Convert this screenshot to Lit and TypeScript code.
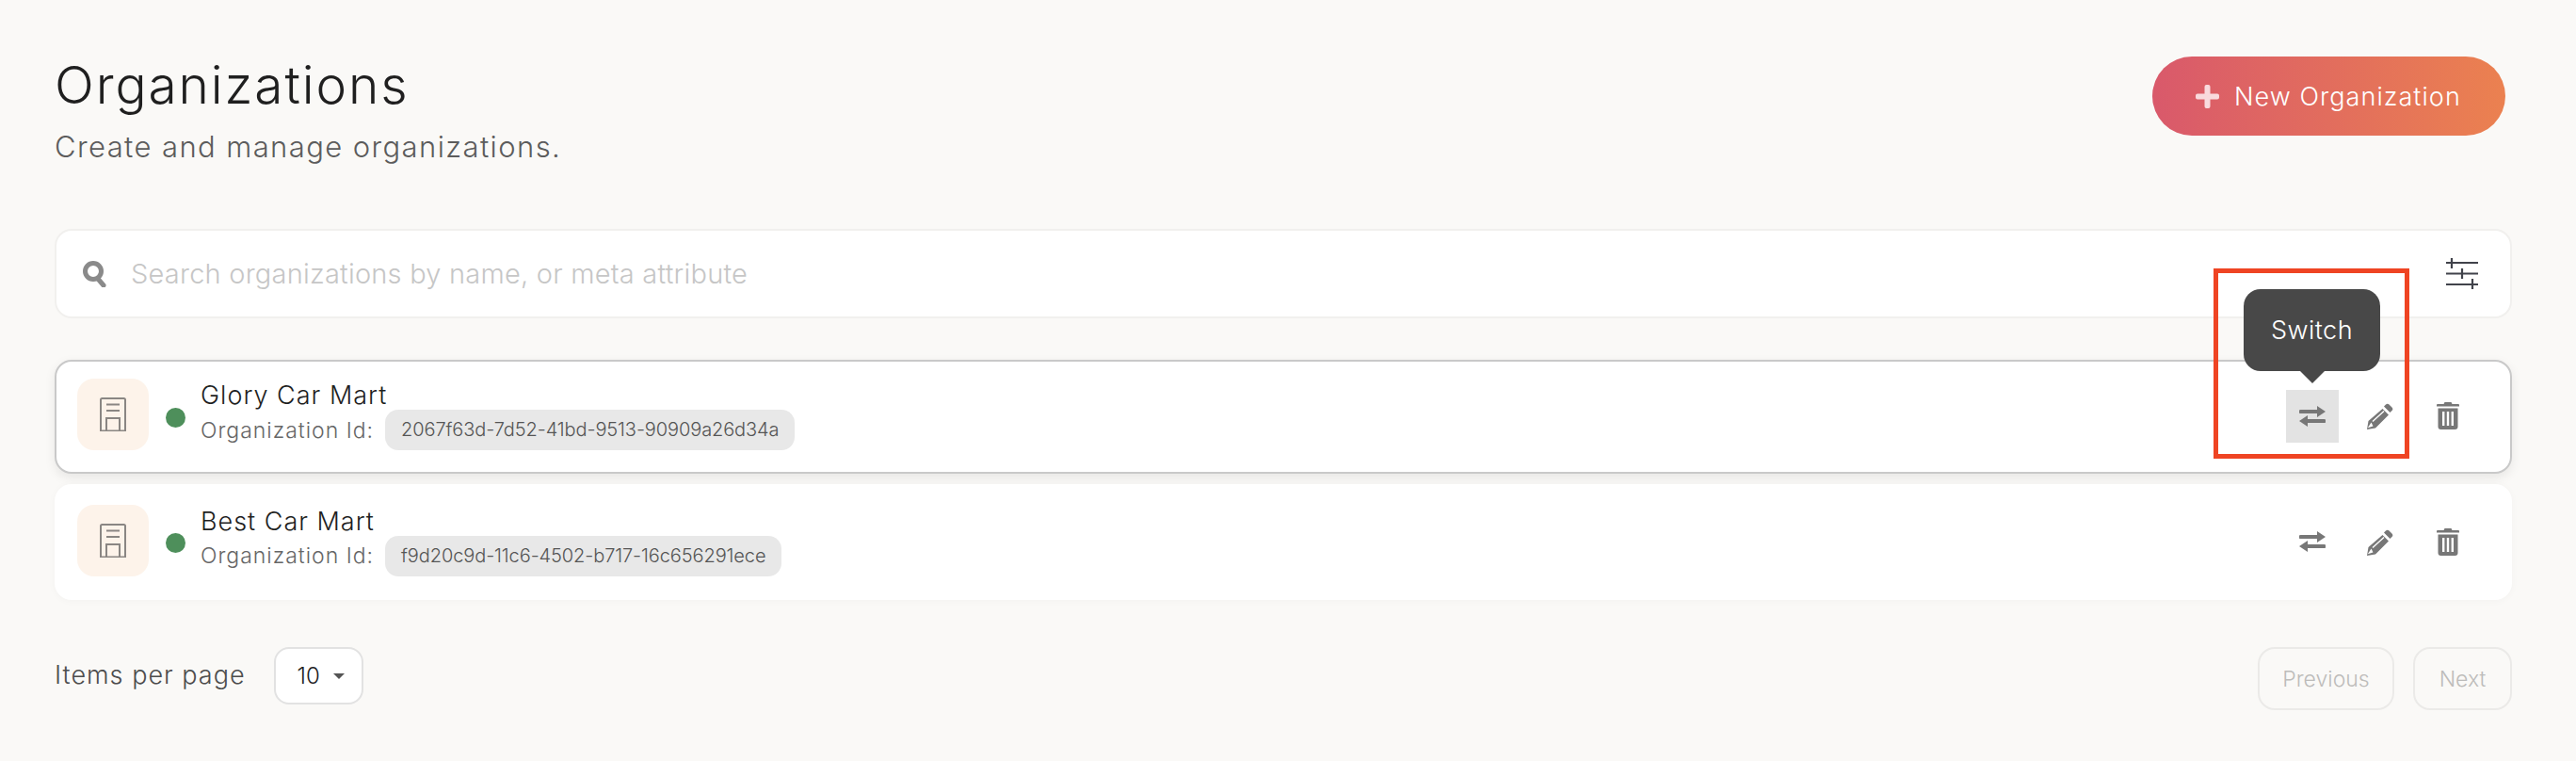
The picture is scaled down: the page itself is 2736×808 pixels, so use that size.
import { LitElement, html, css, svg } from "lit";
import { customElement } from "lit/decorators.js";

const orgs = [
  { name: "Glory Car Mart", id: "2067f63d-7d52-41bd-9513-90909a26d34a", active: true },
  { name: "Best Car Mart", id: "f9d20c9d-11c6-4502-b717-16c656291ece", active: false },
];

const buildingIcon = svg`<path d="M1 36V2.500A1.500 1.500 0 0 1 2.500 1h23A1.500 1.500 0 0 1 27 2.500V36M0 35.500h28M7 7.500h14M7 14h14M7 36V22h14v14" fill="none" stroke="currentColor" stroke-width="2"/>`;
const switchIcon = svg`<path d="M19 0l9 6-9 6V8H1.500a2 2 0 0 1 0-4H19zM9 10v4h17.500a2 2 0 0 1 0 4H9v4l-9-6z" fill="currentColor"/>`;
const editIcon = svg`<path d="M20 2.500a2.500 2.500 0 0 1 3.500 0l3 3a2.500 2.500 0 0 1 0 3.500l-2 2-6.500-6.500zM16.500 7l6.500 6.500L9 27.500l-9 1.500 1.500-9z" fill="currentColor"/><path d="M6 20.500L18 9.500M2.500 26l2-3 1 2z" stroke="#fff" stroke-width="1.400" fill="none"/>`;
const trashIcon = svg`<path d="M8.500 0h7l1 2H23a1 1 0 0 1 1 1v1.500H0V3a1 1 0 0 1 1-1h6.500zM1.500 6.500h21V26a3 3 0 0 1-3 3h-15a3 3 0 0 1-3-3zM6 10v15h2.400V10zm4.800 0v15h2.400V10zm4.800 0v15H18V10z" fill="currentColor" fill-rule="evenodd"/>`;

@customElement("app-root")
export class AppRoot extends LitElement {
  static styles = css`
    :host {
      display: block;
      height: 808px;
      background: #faf9f7;
      font-family: Inter, "Liberation Sans", sans-serif;
      font-weight: 300;
      color: #1f1f1f;
      box-sizing: border-box;
      padding: 60px 68px 0 58px;
    }
    .head {
      display: flex;
      justify-content: space-between;
      align-items: flex-start;
      height: 141px;
    }
    .title {
      margin: 0;
      font-size: 55px;
      line-height: 60px;
      font-weight: 300;
      letter-spacing: 1.900px;
    }
    .sub {
      margin: 18px 0 0;
      font-size: 31px;
      line-height: 36px;
      letter-spacing: 1.400px;
      color: #5c5c5c;
    }
    .new {
      display: flex;
      align-items: center;
      gap: 16px;
      width: 375px;
      height: 84px;
      box-sizing: border-box;
      padding: 0 46px;
      margin-right: 7px;
      border: none;
      border-radius: 42px;
      background: linear-gradient(90deg, #d9596b, #eb8150);
      color: #fff;
      font: inherit;
      font-size: 27px;
      letter-spacing: 1.050px;
      white-space: nowrap;
    }
    .new svg {
      width: 25px;
      height: 25px;
      flex: none;
      color: #f9dadd;
    }
    .search {
      display: flex;
      align-items: center;
      height: 95px;
      box-sizing: border-box;
      margin-top: 42px;
      padding: 0 34px 0 27px;
      background: #fff;
      border: 2px solid #f1f0ee;
      border-radius: 18px;
    }
    .search .glass {
      width: 28px;
      height: 28px;
      color: #8a8a8a;
    }
    .search .ph {
      flex: 1;
      margin-left: 24px;
      font-size: 29px;
      letter-spacing: 0.220px;
      color: #c6c6c6;
    }
    .search .tune {
      width: 34px;
      height: 33px;
      color: #41434b;
    }
    .list {
      display: flex;
      flex-direction: column;
      gap: 11px;
      margin-top: 44px;
    }
    .row {
      display: flex;
      align-items: center;
      height: 123px;
      box-sizing: border-box;
      padding: 0 40px 4px 24px;
      background: #fff;
      border-radius: 18px;
      box-shadow: 0 1px 8px rgba(0, 0, 0, 0.03);
    }
    .row.active {
      height: 121px;
      border: 2px solid #c9c9c9;
      padding-left: 22px;
      padding-right: 38px;
      padding-bottom: 5px;
      box-shadow: 0 4px 12px rgba(0, 0, 0, 0.08);
    }
    .tile {
      display: flex;
      align-items: center;
      justify-content: center;
      width: 76px;
      height: 76px;
      border-radius: 18px;
      background: #fdf3ea;
      color: #8a8683;
    }
    .tile svg {
      width: 28px;
      height: 36px;
    }
    .dot {
      width: 21px;
      height: 21px;
      margin: 6px 16px 0 18px;
      border-radius: 50%;
      background: #4e8f5b;
    }
    .info {
      margin-top: 2px;
    }
    .name {
      font-size: 27px;
      line-height: 32px;
      letter-spacing: 1px;
      color: #1f1f1f;
    }
    .meta {
      display: flex;
      align-items: center;
      gap: 12px;
      margin-top: -1px;
      font-size: 23px;
      letter-spacing: 1px;
      color: #666;
    }
    .pill {
      padding: 0 17px;
      height: 43px;
      line-height: 43px;
      border-radius: 14px;
      background: #e8e8e8;
      font-size: 20px;
      letter-spacing: -0.100px;
      color: #555;
    }
    .actions {
      display: flex;
      align-items: center;
      gap: 16px;
      margin-left: auto;
      margin-top: 3px;
    }
    .act {
      display: flex;
      align-items: center;
      justify-content: center;
      width: 56px;
      height: 56px;
      color: #777;
    }
    .act.on {
      background: #e3e3e3;
    }
    .act .sw {
      width: 28px;
      height: 22px;
    }
    .act .ed {
      width: 28px;
      height: 29px;
    }
    .act .tr {
      width: 24px;
      height: 29px;
    }
    .foot {
      display: flex;
      align-items: flex-start;
      margin-top: 50px;
    }
    .foot .label {
      font-size: 27px;
      line-height: 59px;
      letter-spacing: 1px;
      color: #4d4d4d;
    }
    .select {
      display: flex;
      align-items: center;
      gap: 14px;
      width: 95px;
      height: 61px;
      box-sizing: border-box;
      margin-left: 30px;
      padding-left: 23px;
      background: #fff;
      border: 2px solid #e2e2e2;
      border-radius: 16px;
      font-size: 24px;
    }
    .caret {
      width: 0;
      height: 0;
      border-left: 6px solid transparent;
      border-right: 6px solid transparent;
      border-top: 6px solid #555;
    }
    .pager {
      display: flex;
      gap: 20px;
      margin-left: auto;
    }
    .pager span {
      display: flex;
      align-items: center;
      justify-content: center;
      height: 67px;
      box-sizing: border-box;
      border: 2px solid #ebeae8;
      border-radius: 18px;
      font-size: 23px;
      color: #bdbcba;
    }
    .prev {
      width: 145px;
    }
    .next {
      width: 105px;
    }
    .mark {
      position: absolute;
      left: 2351px;
      top: 285px;
      width: 208px;
      height: 202px;
      box-sizing: border-box;
      border: 5px solid #ef4423;
    }
    .tip {
      position: absolute;
      left: 2383px;
      top: 307px;
      width: 145px;
      height: 87px;
      display: flex;
      align-items: center;
      justify-content: center;
      border-radius: 18px;
      background: #484848;
      color: #fff;
      font-size: 27px;
      letter-spacing: 0.500px;
    }
    .tip::after {
      content: "";
      position: absolute;
      left: 60px;
      top: 87px;
      border-left: 13px solid transparent;
      border-right: 13px solid transparent;
      border-top: 13px solid #484848;
    }
  `;

  renderRow(org: { name: string; id: string; active: boolean }) {
    return html`
      <div class="row ${org.active ? "active" : ""}">
        <div class="tile">
          <svg viewBox="0 0 28 36">${buildingIcon}</svg>
        </div>
        <div class="dot"></div>
        <div class="info">
          <div class="name">${org.name}</div>
          <div class="meta">
            <span>Organization Id:</span>
            <span class="pill">${org.id}</span>
          </div>
        </div>
        <div class="actions">
          <div class="act ${org.active ? "on" : ""}">
            <svg class="sw" viewBox="0 0 28 22">${switchIcon}</svg>
          </div>
          <div class="act"><svg class="ed" viewBox="0 0 28 29">${editIcon}</svg></div>
          <div class="act"><svg class="tr" viewBox="0 0 24 29">${trashIcon}</svg></div>
        </div>
      </div>
    `;
  }

  render() {
    return html`
      <div class="head">
        <div>
          <h1 class="title">Organizations</h1>
          <p class="sub">Create and manage organizations.</p>
        </div>
        <button class="new">
          <svg viewBox="0 0 25 25">
            <path d="M9.500 2a2 2 0 0 1 2-2h2a2 2 0 0 1 2 2v7.500H23a2 2 0 0 1 2 2v2a2 2 0 0 1-2 2h-7.500V23a2 2 0 0 1-2 2h-2a2 2 0 0 1-2-2v-7.500H2a2 2 0 0 1-2-2v-2a2 2 0 0 1 2-2h7.500z" fill="currentColor"/>
          </svg>
          New Organization
        </button>
      </div>
      <div class="search">
        <svg class="glass" viewBox="0 0 28 28">
          <circle cx="12" cy="11" r="8.500" fill="none" stroke="currentColor" stroke-width="5"/>
          <path d="M17 19l6 7" stroke="currentColor" stroke-width="5" stroke-linecap="round"/>
        </svg>
        <span class="ph">Search organizations by name, or meta attribute</span>
        <svg class="tune" viewBox="0 0 34 33">
          <path d="M0 5h34M0 16.500h34M0 28h34M6 0v11M17 11v11M28 22v11" fill="none" stroke="currentColor" stroke-width="2.200"/>
        </svg>
      </div>
      <div class="list">${orgs.map((o) => this.renderRow(o))}</div>
      <div class="foot">
        <span class="label">Items per page</span>
        <div class="select">10 <i class="caret"></i></div>
        <div class="pager">
          <span class="prev">Previous</span>
          <span class="next">Next</span>
        </div>
      </div>
      <div class="tip">Switch</div>
      <div class="mark"></div>
    `;
  }
}
